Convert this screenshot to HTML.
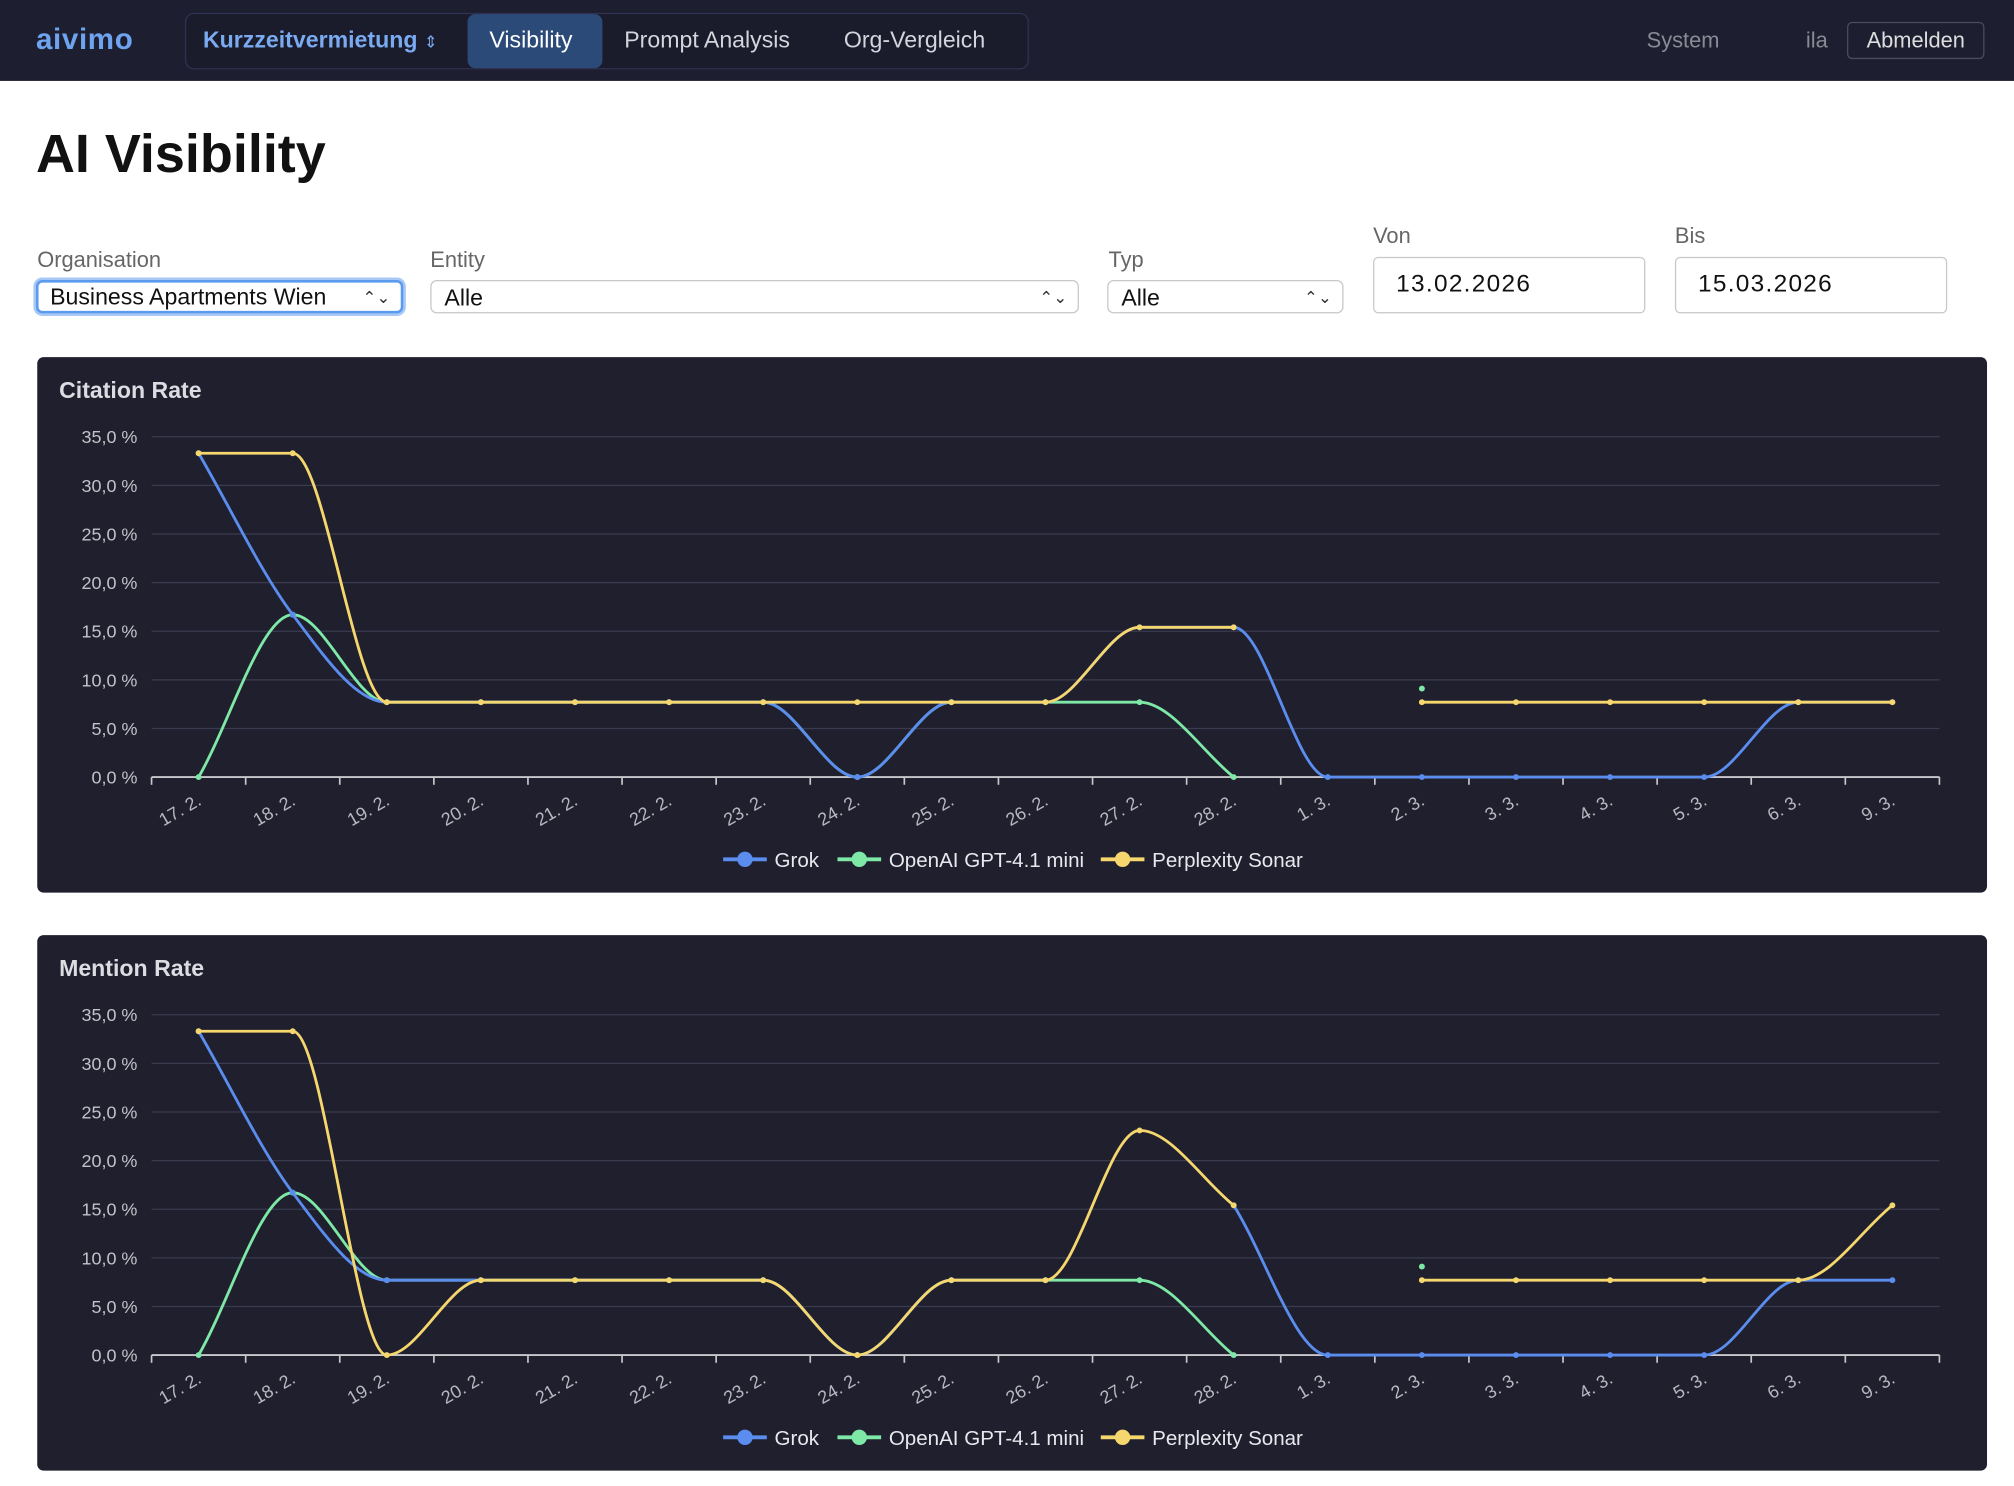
<!DOCTYPE html>
<html><head><meta charset="utf-8"><style>
html,body{margin:0;padding:0;background:#fff;overflow:hidden}
body{width:2014px;height:1486px;font-family:"Liberation Sans",sans-serif}
#w{position:absolute;left:0;top:0;width:1568px;height:1157px;transform:scale(1.284439);transform-origin:0 0}
.a{position:absolute;white-space:nowrap}
.nav{position:absolute;left:0;top:0;width:1568px;height:63px;background:#1d1e2f}
.grp{position:absolute;left:144px;top:10px;width:655px;height:42px;border:1px solid #303252;border-radius:7px;background:#1a1b2b}
.sel{position:absolute;height:26px;border:1px solid #c8c8c8;border-radius:5px;background:#fff;font-size:18px;line-height:26px;box-sizing:border-box;padding-left:10px;color:#111}
.sel .ar{position:absolute;right:8px;top:0;font-size:13px;color:#333}
.lbl{position:absolute;font-size:17px;color:#666}
.inp{position:absolute;height:44px;border:1px solid #c8c8c8;border-radius:4px;box-sizing:border-box;font-size:19px;line-height:42px;padding-left:17px;color:#111;letter-spacing:1px}
.card{position:absolute;left:29px;width:1518px;height:417px;background:#1f1f2e;border-radius:5px}
</style></head><body><div id="w">
<div class="nav">
 <div class="a" style="left:28px;top:17px;font-size:23px;font-weight:bold;color:#6ea4ef;letter-spacing:.5px">aivimo</div>
 <div class="grp"></div>
 <div class="a" style="left:158px;top:21px;font-size:18px;font-weight:bold;color:#7aaaf0">Kurzzeitvermietung <span style="font-size:13px;font-weight:normal">⇕</span></div>
 <div class="a" style="left:364px;top:11px;width:105px;height:42px;background:#2c4a78;border-radius:6px"></div>
 <div class="a" style="left:381px;top:21px;font-size:18px;color:#fff">Visibility</div>
 <div class="a" style="left:486px;top:21px;font-size:18px;color:#d4d4dc">Prompt Analysis</div>
 <div class="a" style="left:657px;top:21px;font-size:18px;color:#d4d4dc">Org-Vergleich</div>
 <div class="a" style="left:1282px;top:22px;font-size:17px;color:#8a8a95">System</div>
 <div class="a" style="left:1406px;top:22px;font-size:17px;color:#8a8a95">ila</div>
 <div class="a" style="left:1438px;top:17px;width:107px;height:29px;border:1px solid #4a4b5c;border-radius:4px;box-sizing:border-box;text-align:center;font-size:17px;line-height:27px;color:#ddd">Abmelden</div>
</div>
<div class="a" style="left:28px;top:96px;font-size:42px;font-weight:bold;color:#111">AI Visibility</div>
<div class="lbl" style="left:29px;top:193px">Organisation</div>
<div class="lbl" style="left:335px;top:193px">Entity</div>
<div class="lbl" style="left:863px;top:193px">Typ</div>
<div class="lbl" style="left:1069px;top:174px">Von</div>
<div class="lbl" style="left:1304px;top:174px">Bis</div>
<div class="sel" style="left:28px;top:218px;width:286px;border:2px solid #5b9bef;box-shadow:0 0 0 2px #a8c8f5;padding-left:9px;line-height:23px">Business Apartments Wien<span class="ar">⌃⌄</span></div>
<div class="sel" style="left:335px;top:218px;width:505px">Alle<span class="ar">⌃⌄</span></div>
<div class="sel" style="left:862px;top:218px;width:184px">Alle<span class="ar">⌃⌄</span></div>
<div class="inp" style="left:1069px;top:200px;width:212px">13.02.2026</div>
<div class="inp" style="left:1304px;top:200px;width:212px">15.03.2026</div>
<div class="card" style="top:278px"></div>
<div class="card" style="top:728px"></div>
<svg id="s" class="a" style="left:0;top:0" width="1568" height="1157"></svg>
</div>
<script>
var N=null;
var labels=["17. 2.","18. 2.","19. 2.","20. 2.","21. 2.","22. 2.","23. 2.","24. 2.","25. 2.","26. 2.","27. 2.","28. 2.","1. 3.","2. 3.","3. 3.","4. 3.","5. 3.","6. 3.","9. 3."];
var A=7.7;
var blue1=[33.3,16.7,A,A,A,A,A,0,A,A,15.4,15.4,0,0,0,0,0,A,A];
var blue2=[33.3,16.7,A,A,A,A,A,0,A,A,N,15.4,0,0,0,0,0,A,A];
var green=[0,16.7,A,A,A,A,A,0,A,A,A,0,N,9.1,N,N,N,N,N];
var y1=[33.3,33.3,A,A,A,A,A,A,A,A,15.4,15.4,N,A,A,A,A,A,A];
var y2=[33.3,33.3,0,A,A,A,A,0,A,A,23.1,15.4,N,A,A,A,A,A,15.4];
var C={b:"#5b8def",g:"#7ee8a6",y:"#f5d76e"};
var out="";
function X(i){return 118+36.63+73.26*i}
function mono(pts){
 var n=pts.length;if(n<2)return "";
 var d=[],m=[];
 for(var i=0;i<n-1;i++)d.push((pts[i+1][1]-pts[i][1])/(pts[i+1][0]-pts[i][0]));
 m[0]=d[0];m[n-1]=d[n-2];
 for(i=1;i<n-1;i++)m[i]=(d[i-1]*d[i]<=0)?0:(d[i-1]+d[i])/2;
 for(i=0;i<n-1;i++){if(d[i]==0){m[i]=0;m[i+1]=0;continue;}var a=m[i]/d[i],b=m[i+1]/d[i],s=a*a+b*b;if(s>9){var t=3/Math.sqrt(s);m[i]=t*a*d[i];m[i+1]=t*b*d[i];}}
 var p="M"+pts[0][0]+","+pts[0][1];
 for(i=0;i<n-1;i++){var h=(pts[i+1][0]-pts[i][0])/3;
  p+=" C"+(pts[i][0]+h)+","+(pts[i][1]+m[i]*h)+" "+(pts[i+1][0]-h)+","+(pts[i+1][1]-m[i+1]*h)+" "+pts[i+1][0]+","+pts[i+1][1];}
 return p;
}
function series(data,col,oy){
 var Y=function(v){return 605+oy-v*265/35};
 var seg=[],all=[];
 for(var i=0;i<data.length;i++){
  if(data[i]===N){if(seg.length)all.push(seg);seg=[];continue;}
  seg.push([X(i),Y(data[i])]);
 }
 if(seg.length)all.push(seg);
 all.forEach(function(s){out+='<path d="'+mono(s)+'" fill="none" stroke="'+col+'" stroke-width="2.2"/>';
  s.forEach(function(p){out+='<circle cx="'+p[0]+'" cy="'+p[1]+'" r="2.3" fill="'+col+'"/>';});});
}
function chart(oy,title,bl,yel){
 out+='<text x="46" y="'+(310+oy)+'" font-size="18" font-weight="bold" fill="#dcdce2">'+title+'</text>';
 for(var k=0;k<=7;k++){var y=605+oy-k*265/7;
  out+='<line x1="118" x2="1510" y1="'+y+'" y2="'+y+'" stroke="'+(k==0?"#c8c8cc":"#3a3b4e")+'" stroke-width="'+(k==0?1.5:1)+'"/>';
  out+='<text x="107" y="'+(y+5)+'" text-anchor="end" font-size="14" fill="#c2c2c8">'+(k*5)+',0 %</text>';}
 for(k=0;k<=19;k++){var x=118+73.26*k;out+='<line x1="'+x+'" x2="'+x+'" y1="'+(605+oy)+'" y2="'+(611+oy)+'" stroke="#c8c8cc" stroke-width="1.3"/>';}
 labels.forEach(function(l,i){var x=X(i)+3,y=626+oy;out+='<text x="'+x+'" y="'+y+'" text-anchor="end" font-size="14" fill="#b8b8c0" transform="rotate(-30 '+x+' '+y+')">'+l+'</text>';});
 series(green,C.g,oy);series(bl,C.b,oy);series(yel,C.y,oy);
 var L=[[563,C.b,"Grok"],[652,C.g,"OpenAI GPT-4.1 mini"],[857,C.y,"Perplexity Sonar"]];
 L.forEach(function(l){var y=669+oy;out+='<line x1="'+l[0]+'" x2="'+(l[0]+34)+'" y1="'+y+'" y2="'+y+'" stroke="'+l[1]+'" stroke-width="3"/><circle cx="'+(l[0]+17)+'" cy="'+y+'" r="6" fill="'+l[1]+'"/><text x="'+(l[0]+40)+'" y="'+(y+6)+'" font-size="16" fill="#e8e8ee">'+l[2]+'</text>';});
}
chart(0,"Citation Rate",blue1,y1);
chart(450,"Mention Rate",blue2,y2);
document.getElementById("s").innerHTML=out;
</script>
</body></html>
